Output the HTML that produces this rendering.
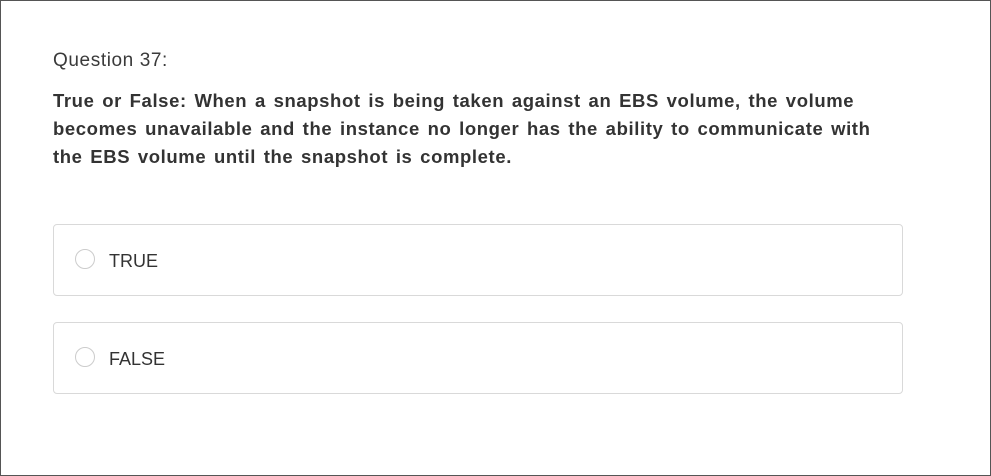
<!DOCTYPE html>
<html><head><style>
html,body{margin:0;padding:0;}
body{width:991px;height:476px;background:#fff;font-family:"Liberation Sans",sans-serif;color:#333;}
.frame{position:absolute;left:0;top:0;width:989px;height:474px;border:1px solid #555;}
.q{position:absolute;left:53px;top:50px;font-size:19px;letter-spacing:0.6px;color:#3a3a3a;}
.t{position:absolute;left:53px;top:87px;width:900px;font-size:18.5px;font-weight:bold;line-height:28px;color:#333;letter-spacing:0.6px;word-spacing:2px;white-space:nowrap;}
.opt{position:absolute;left:53px;width:848px;height:70px;border:1px solid #d9d9d9;border-radius:4px;}
.r{position:absolute;left:21px;top:24px;width:20px;height:20px;border:1px solid #ccc;border-radius:50%;box-sizing:border-box;}
.l{position:absolute;left:55px;top:26px;font-size:18px;color:#333;}
</style></head><body>
<div class="frame"></div>
<div class="q">Question 37:</div>
<div class="t">True or False: When a snapshot is being taken against an EBS volume, the volume<br>becomes unavailable and the instance no longer has the ability to communicate with<br>the EBS volume until the snapshot is complete.</div>
<div class="opt" style="top:224px"><div class="r"></div><div class="l">TRUE</div></div>
<div class="opt" style="top:322px"><div class="r"></div><div class="l">FALSE</div></div>
</body></html>
